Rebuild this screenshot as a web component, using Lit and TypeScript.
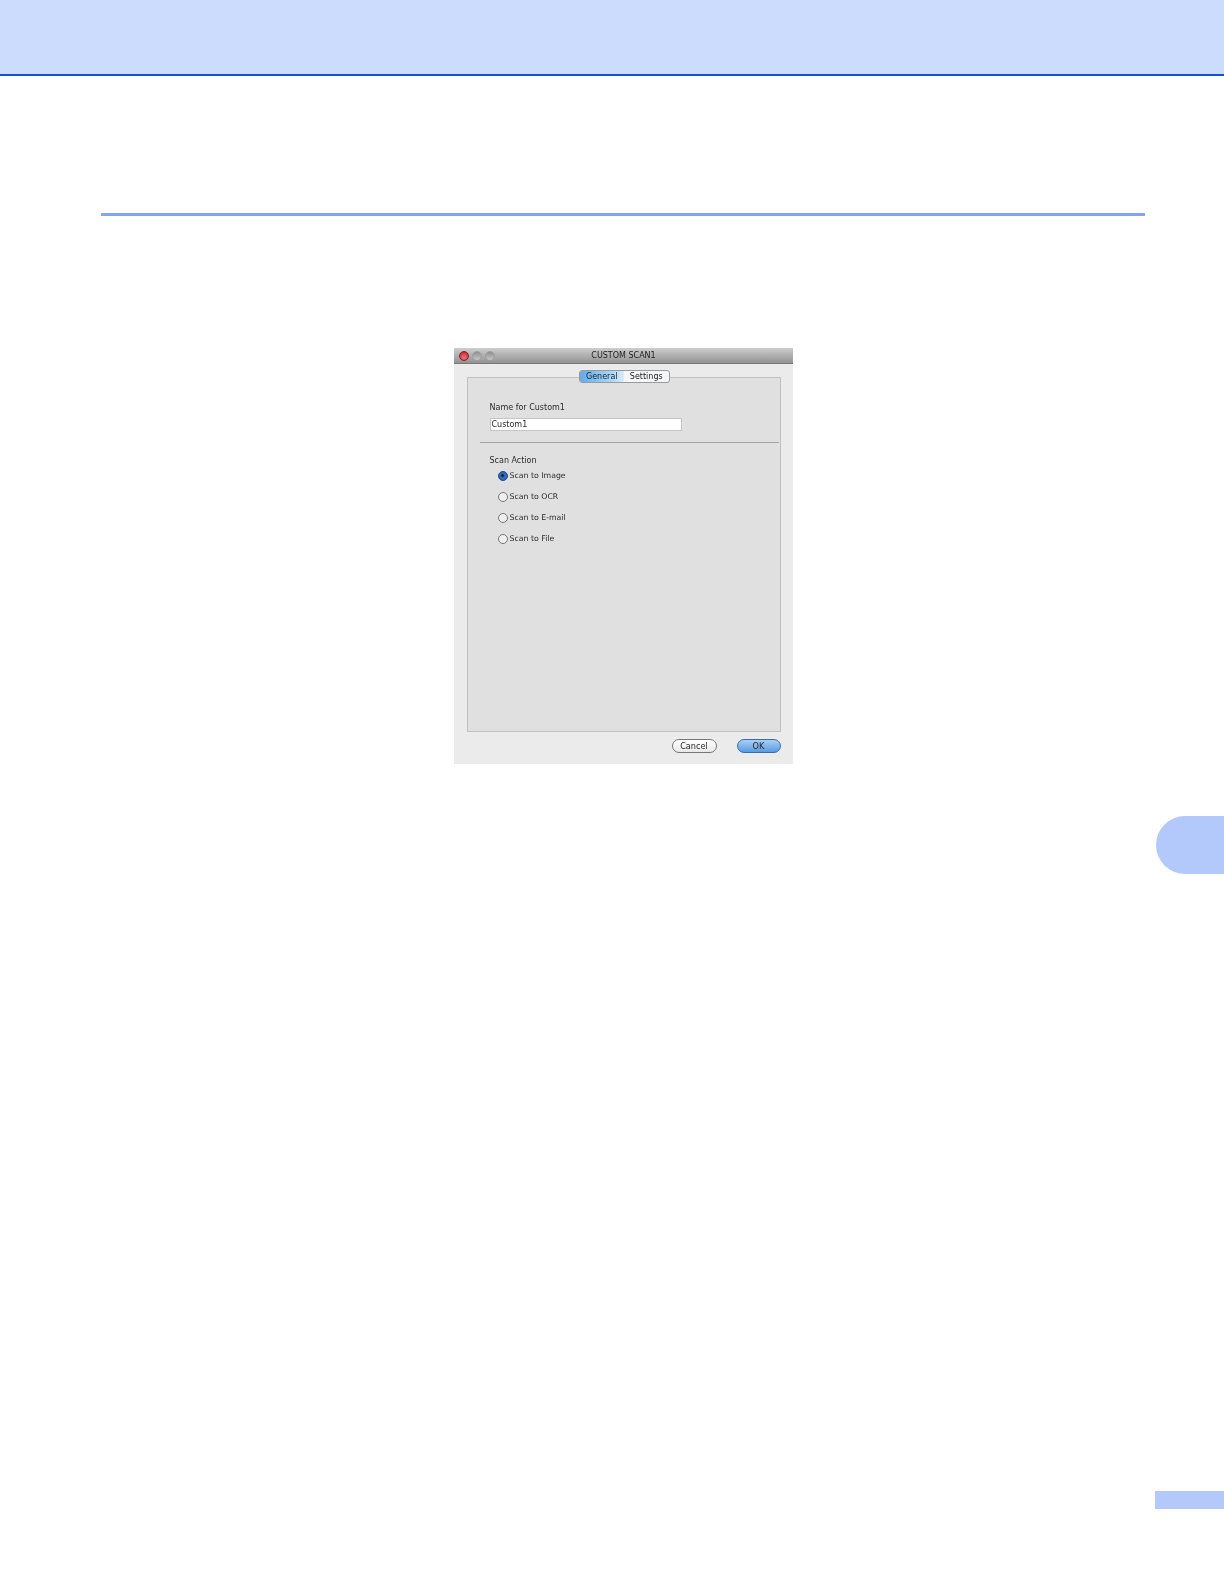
import { LitElement, html, css } from "lit";
import { customElement } from "lit/decorators.js";

@customElement("app-root")
export class AppRoot extends LitElement {
  static styles = css`
    :host { display: block; position: relative; width: 1224px; height: 1584px; background: #fff; overflow: hidden; font-family: "DejaVu Sans", sans-serif; color: #2a2a2a; }
    .top { height: 74px; background: #ccdcfd; border-bottom: 2px solid #1a50d8; }
    .content { padding: 137px 79px 0 101px; }
    .rule { height: 3px; background: #86a5f0; }
    .center { display: flex; justify-content: center; margin-top: 132px; }
    .dialog { width: 339px; height: 416px; background: #ebebeb; display: flex; flex-direction: column; font-size: 8px; filter: blur(0.3px); }
    .title { height: 15px; background: linear-gradient(#cdcdcd, #939393); display: flex; align-items: center; position: relative; padding-left: 5px; gap: 3px; border-bottom: 1px solid #777; }
    .dot { width: 10px; height: 10px; border-radius: 50%; background: linear-gradient(#8f8f8f, #c6c6c6); border: 1px solid #a0a0a0; box-sizing: border-box; }
    .dot.red { background: radial-gradient(circle at 50% 70%, #f2747c, #b81626); border-color: #8c2020; }
    .title-text { position: absolute; left: 1px; right: 0; text-align: center; font-size: 8px; color: #1c1c1c; }
    .body { flex: 1; padding: 13px 12px 0 13px; display: flex; flex-direction: column; }
    .panel { position: relative; height: 355px; background: #e0e0e0; border: 1px solid #c0c0c0; box-sizing: border-box; }
    .tabs { position: absolute; top: -8px; left: 111px; display: flex; height: 13px; width: 91px; border: 1px solid #9a9a9a; border-radius: 3px; box-sizing: border-box; background: #f4f6f8; align-items: center; overflow: hidden; font-size: 8px; }
    .tab { flex: 1; text-align: center; line-height: 11px; color: #222; }
    .tab.on { background: linear-gradient(90deg, #62ace8, #a8d6f8 70%, #dcecf8); color: #123; }
    .name-label { position: absolute; left: 22px; top: 25px; }
    .input { position: absolute; left: 22px; top: 40px; width: 192px; height: 13px; background: #fff; border: 1px solid #c4c4c4; box-sizing: border-box; padding-left: 1px; line-height: 11px; }
    .divider { position: absolute; left: 12px; right: 1px; top: 64px; height: 1px; background: #a3a3a3; }
    .action-label { position: absolute; left: 22px; top: 78px; }
    .radios { position: absolute; left: 30px; top: 91px; display: flex; flex-direction: column; gap: 8px; }
    .radio { display: flex; align-items: center; gap: 1px; height: 13px; font-size: 7.8px; }
    .circle { width: 8px; height: 8px; border-radius: 50%; background: #efefef; border: 1px solid #777; display: inline-block; flex: none; position: relative; margin-right: 1px; }
    .circle.on { background: #2f68b4; border-color: #1d4c8e; }
    .circle.on::after { content: ""; position: absolute; left: 2.5px; top: 2.5px; width: 3px; height: 3px; border-radius: 50%; background: #10243f; }
    .buttons { display: flex; justify-content: flex-end; gap: 20px; padding: 7px 0 0; }
    .btn { width: 45px; height: 14px; border-radius: 8px; box-sizing: border-box; border: 1px solid #777; text-align: center; line-height: 12px; background: linear-gradient(#fff, #e8e8e8); font-size: 8.2px; }
    .btn.ok { width: 44px; background: linear-gradient(#a8d0f4, #5a9be4); border-color: #3b6ba8; }
    .side { position: absolute; left: 1156px; top: 816px; width: 68px; height: 58px; border-radius: 29px 0 0 29px; background: #b3c8fb; }
    .page { position: absolute; left: 1155px; top: 1491px; width: 69px; height: 18px; background: #b3c8fb; }
  `;

  render() {
    const radios = ["Scan to Image", "Scan to OCR", "Scan to E-mail", "Scan to File"];
    return html`
      <div class="top"></div>
      <div class="content">
        <div class="rule"></div>
        <div class="center">
          <div class="dialog">
            <div class="title">
              <span class="dot red"></span><span class="dot"></span><span class="dot"></span>
              <span class="title-text">CUSTOM SCAN1</span>
            </div>
            <div class="body">
              <div class="panel">
                <div class="tabs"><div class="tab on">General</div><div class="tab">Settings</div></div>
                <div class="name-label">Name for Custom1</div>
                <div class="input">Custom1</div>
                <div class="divider"></div>
                <div class="action-label">Scan Action</div>
                <div class="radios">
                  ${radios.map((r, i) => html`<div class="radio"><span class="circle ${i === 0 ? "on" : ""}"></span>${r}</div>`)}
                </div>
              </div>
              <div class="buttons"><div class="btn">Cancel</div><div class="btn ok">OK</div></div>
            </div>
          </div>
        </div>
      </div>
      <div class="side"></div>
      <div class="page"></div>
    `;
  }
}
